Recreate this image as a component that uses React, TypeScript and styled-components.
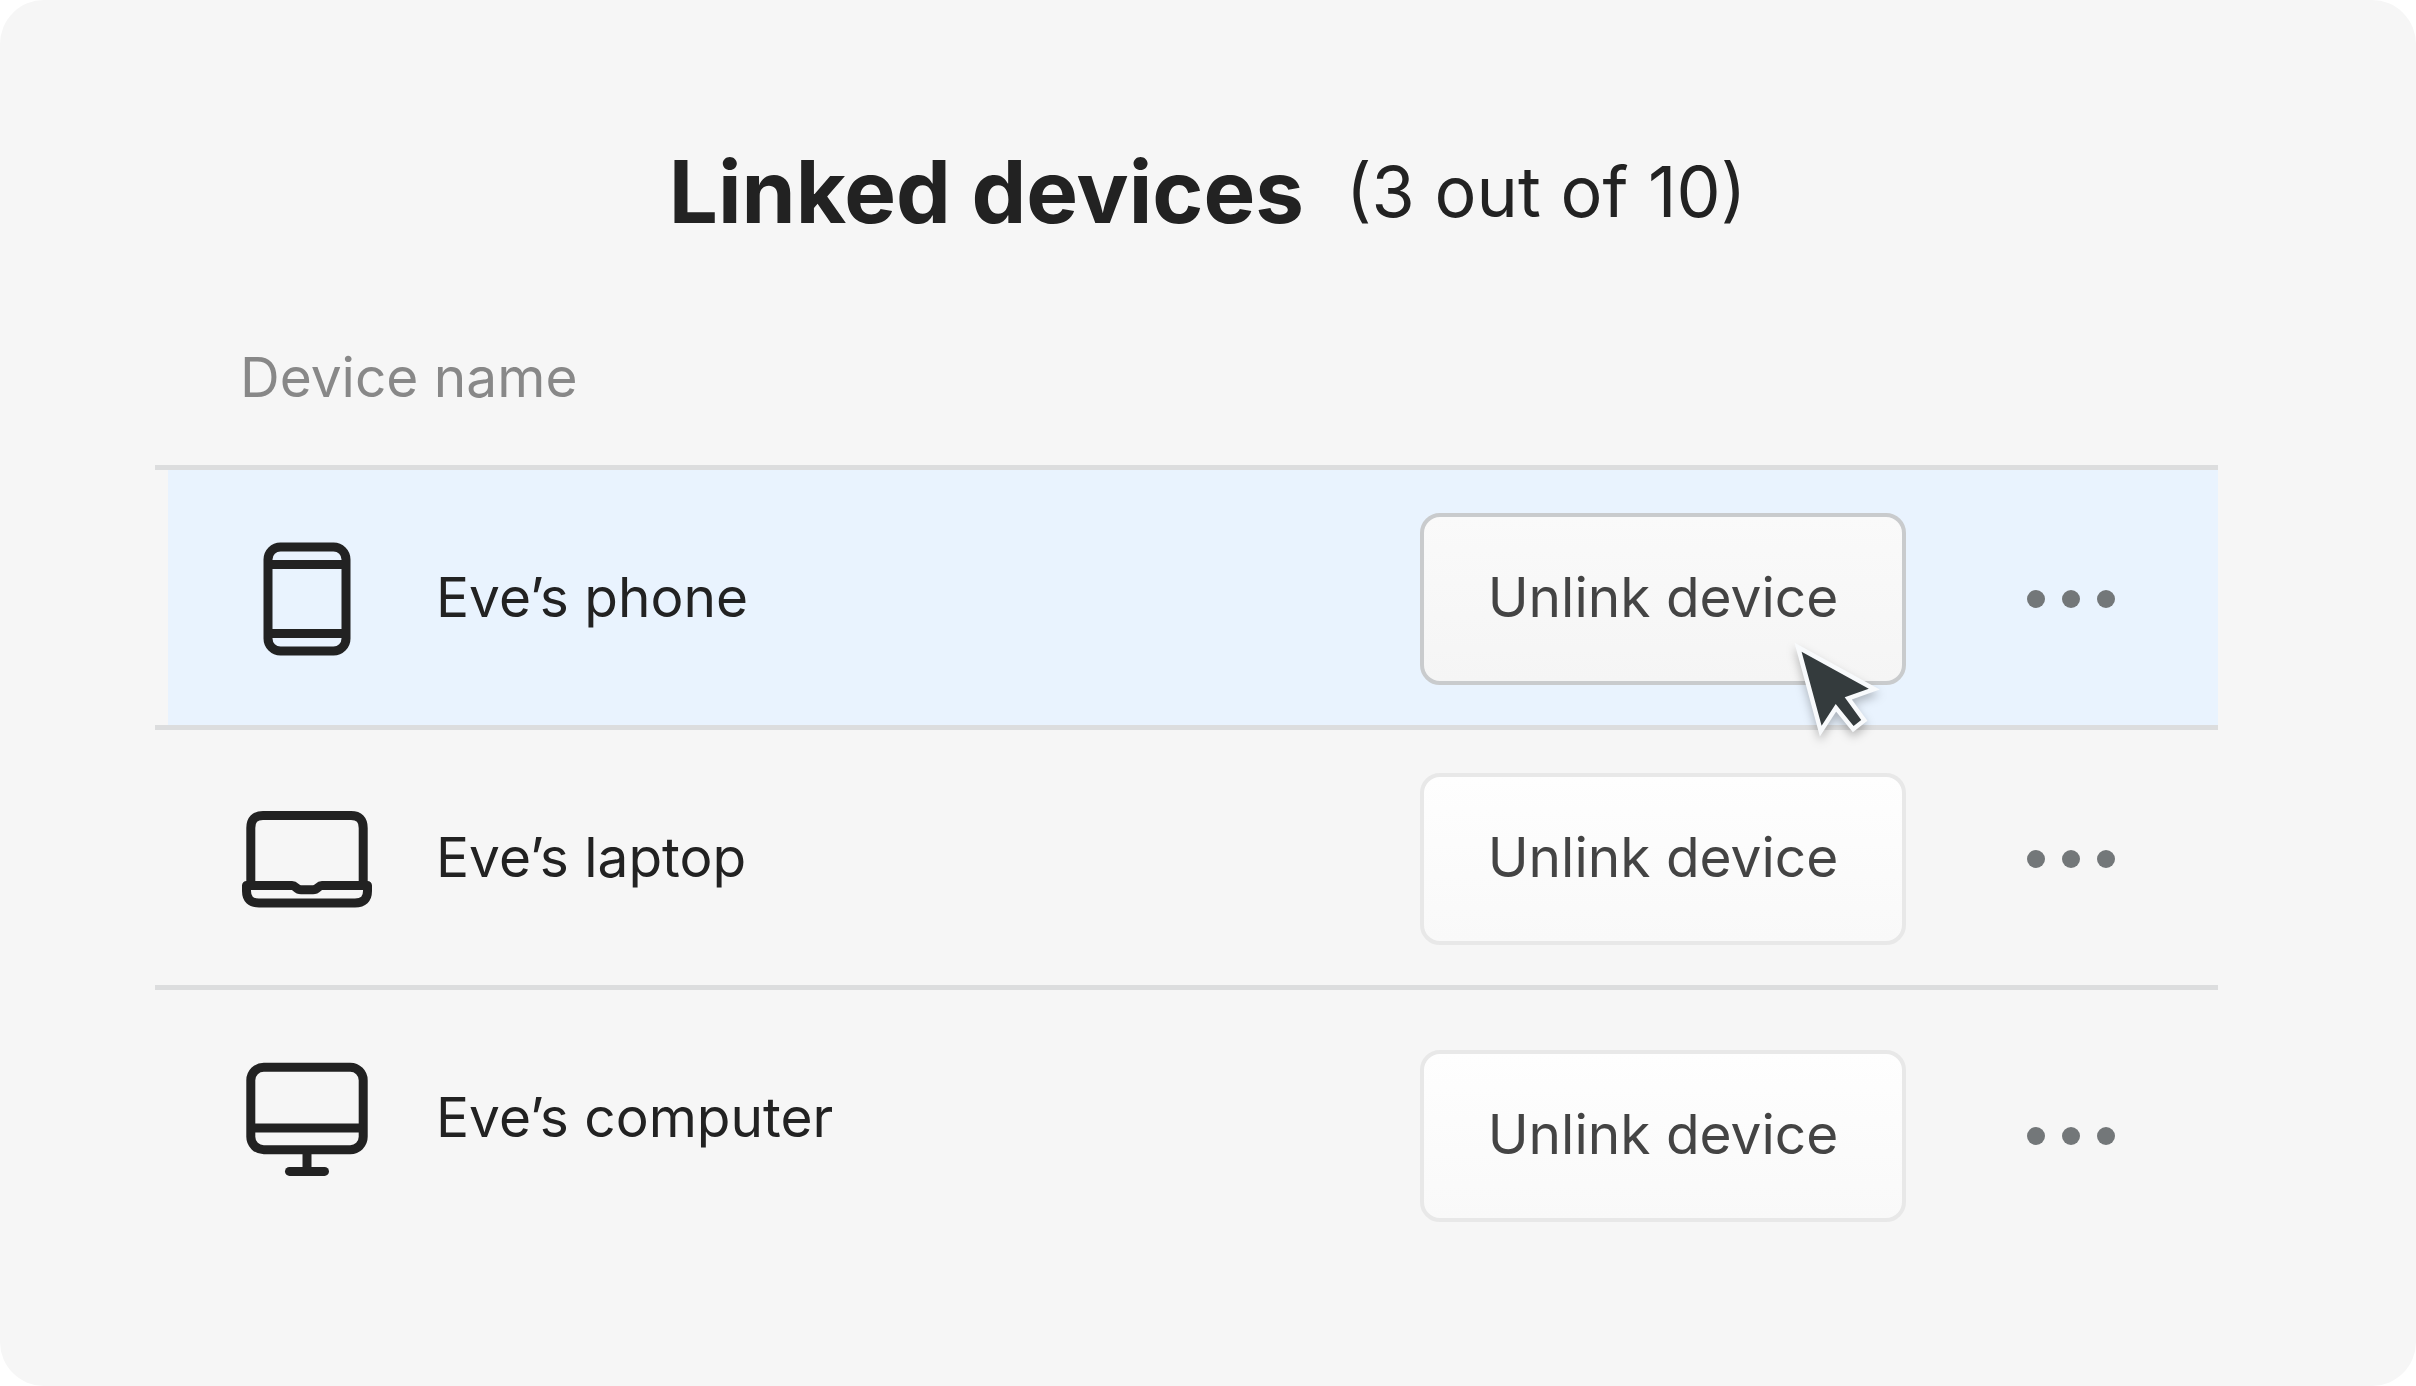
import React from "react";
import styled, { createGlobalStyle, css } from "styled-components";

const GlobalStyle = createGlobalStyle`
  *, *::before, *::after { box-sizing: border-box; }
  body {
    margin: 0;
    background: #ffffff;
    font-family: Inter, "Liberation Sans", sans-serif;
    color: #222222;
  }
`;

const Card = styled.main`
  min-height: 100vh;
  padding: 136px 198px 128px 155px;
  border-radius: 44px;
  background: #f6f6f6;
`;

const Header = styled.header`
  display: flex;
  justify-content: center;
  align-items: center;
  gap: 42px;
  padding-left: 42px;
  line-height: 112px;
`;

const Title = styled.h1`
  margin: 0;
  font-size: 87px;
  font-weight: 700;
`;

const Count = styled.span`
  font-size: 70px;
  font-weight: 400;
`;

const DeviceTable = styled.table`
  width: 100%;
  margin-top: 64px;
  border-spacing: 0;
`;

const ColumnHeading = styled.th`
  height: 153px;
  padding: 0 0 24px 85px;
  font-size: 55px;
  font-weight: 400;
  line-height: 64px;
  text-align: left;
  color: #888888;
`;

const Cell = styled.td<{ $lowered?: boolean }>`
  height: 260px;
  padding: ${(p) => (p.$lowered ? "36px" : "2px")} 0 0;
  border-top: 5px solid #dcddde;
  vertical-align: middle;
`;

const NameCell = styled(Cell)`
  padding-left: 87px;
`;

const ActionCell = styled(Cell)`
  width: 486px;
`;

const MenuCell = styled(Cell)`
  width: 312px;
  padding-left: 113px;
`;

const Row = styled.tr<{ $active?: boolean }>`
  ${(p) =>
    p.$active &&
    css`
      ${Cell} {
        background: #e9f3fe;
      }
      ${NameCell} {
        background: linear-gradient(#e9f3fe, #e9f3fe) right / calc(100% - 13px) 100% no-repeat;
      }
    `}
`;

const Device = styled.div`
  display: flex;
  align-items: center;
  gap: 64px;
`;

const DeviceName = styled.span`
  padding-bottom: 4px;
  font-size: 55px;
  font-weight: 400;
  line-height: 64px;
`;

const Icon = styled.svg`
  width: 130px;
  height: 116px;
  flex: none;
  fill: none;
  stroke: #222222;
  stroke-width: 9;
`;

const ButtonWrap = styled.div`
  position: relative;
`;

const UnlinkButton = styled.button<{ $active?: boolean }>`
  display: block;
  width: 100%;
  height: 172px;
  padding: 0 0 4px;
  border: 4px solid ${(p) => (p.$active ? "#c9cbcd" : "#e8e8e8")};
  border-radius: 20px;
  background: ${(p) =>
    p.$active
      ? "linear-gradient(#fafafa, #f5f5f5)"
      : "linear-gradient(#fefefe, #f9f9f9)"};
  font: 400 55px/64px Inter, "Liberation Sans", sans-serif;
  color: #444444;
  cursor: pointer;
`;

const MenuButton = styled.button`
  display: flex;
  gap: 17px;
  padding: 16px 8px;
  border: 0;
  background: none;
  cursor: pointer;
`;

const Dot = styled.span`
  width: 18px;
  height: 18px;
  border-radius: 50%;
  background: #737779;
`;

const Pointer = styled.svg`
  position: absolute;
  left: 366px;
  top: 122px;
  width: 110px;
  height: 116px;
  pointer-events: none;
  filter: drop-shadow(0 5px 5px rgba(0, 0, 0, 0.25));
`;

const PhoneIcon = () => (
  <Icon viewBox="0 0 130 116" aria-hidden="true">
    <rect x="26" y="6" width="78" height="104" rx="12.5" />
    <path d="M26 23.5H104M26 92.5H104" />
  </Icon>
);

const LaptopIcon = () => (
  <Icon viewBox="0 0 130 116" aria-hidden="true" strokeLinejoin="round">
    <path d="M8.8 84V27Q8.8 14.5 21 14.5H109Q121.2 14.5 121.2 27V84" />
    <path d="M4.5 84.5H50C54 84.5 54 88.8 59 88.8H71C76 88.8 76 84.5 80 84.5H125.5V90Q125.5 102 113 102H17Q4.5 102 4.5 90Z" />
  </Icon>
);

const ComputerIcon = () => (
  <Icon viewBox="0 0 130 116" aria-hidden="true">
    <rect x="8.8" y="6.2" width="112.4" height="82.6" rx="13" />
    <path d="M8.8 67H121.2M65 88.8V110.4" />
    <path d="M47.5 110.4H82.5" strokeLinecap="round" />
  </Icon>
);

const devices = [
  { name: "Eve’s phone", Glyph: PhoneIcon, active: true },
  { name: "Eve’s laptop", Glyph: LaptopIcon },
  { name: "Eve’s computer", Glyph: ComputerIcon, lowered: true },
];

export default function App() {
  return (
    <>
      <GlobalStyle />
      <Card>
        <Header>
          <Title>Linked devices</Title>
          <Count>(3 out of 10)</Count>
        </Header>
        <DeviceTable>
          <thead>
            <tr>
              <ColumnHeading scope="col" colSpan={3}>
                Device name
              </ColumnHeading>
            </tr>
          </thead>
          <tbody>
            {devices.map(({ name, Glyph, active, lowered }) => (
              <Row key={name} $active={active}>
                <NameCell>
                  <Device>
                    <Glyph />
                    <DeviceName>{name}</DeviceName>
                  </Device>
                </NameCell>
                <ActionCell $lowered={lowered}>
                  <ButtonWrap>
                    <UnlinkButton type="button" $active={active}>
                      Unlink device
                    </UnlinkButton>
                    {active && (
                      <Pointer viewBox="0 0 110 116" aria-hidden="true">
                        <path
                          d="M15.6 16.7L82.8 53.7L58.7 62.3L75.2 85L67.6 91L49.7 69L35.6 90.7Z"
                          fill="#343b3d"
                          stroke="#f8fafc"
                          strokeWidth="9"
                          strokeMiterlimit="8"
                          paintOrder="stroke"
                        />
                      </Pointer>
                    )}
                  </ButtonWrap>
                </ActionCell>
                <MenuCell $lowered={lowered}>
                  <MenuButton type="button" aria-label={`More options for ${name}`}>
                    <Dot />
                    <Dot />
                    <Dot />
                  </MenuButton>
                </MenuCell>
              </Row>
            ))}
          </tbody>
        </DeviceTable>
      </Card>
    </>
  );
}
